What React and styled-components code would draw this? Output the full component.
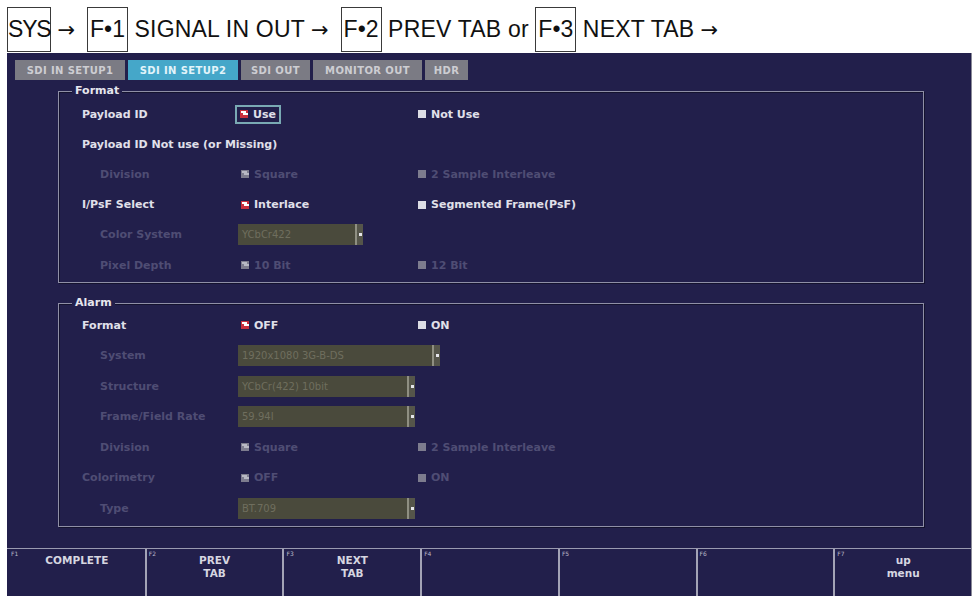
import React from "react";
import styled, { createGlobalStyle, css } from "styled-components";

const GlobalStyle = createGlobalStyle`
  html, body { margin: 0; padding: 0; background: #ffffff; }
  * { box-sizing: border-box; }
`;

const Page = styled.div`
  width: 973px;
  height: 596px;
  display: flex;
  flex-direction: column;
  overflow: hidden;
  background: #fff;
`;

const Breadcrumb = styled.div`
  height: 53px;
  padding: 7px 0 0 7px;
  display: flex;
  align-items: flex-start;
  font-family: "Liberation Sans", Arial, sans-serif;
  font-size: 23px;
  color: #111;
  white-space: pre;
`;

const KeyBox = styled.span`
  height: 45px;
  display: inline-flex;
  align-items: center;
  padding: 0 ${(p) => (p.$tight ? 0 : 2)}px;
  letter-spacing: ${(p) => (p.$tight ? -1.2 : 0)}px;
  border: 1px solid #3a3a3a;
`;

const Crumb = styled.span`
  height: 45px;
  display: inline-flex;
  align-items: center;
  letter-spacing: 0.2px;
`;

const Arrow = styled.span`
  height: 45px;
  display: inline-flex;
  align-items: center;
  font-family: "DejaVu Sans", sans-serif;
  font-size: 21px;
  margin: 0 12px 0 6px;
`;

const Screen = styled.div`
  flex: 1;
  margin-left: 7px;
  width: 965px;
  background: #221f4b;
  border-right: 1px solid #8a8a98;
  display: flex;
  flex-direction: column;
  font-family: "DejaVu Sans", sans-serif;
  padding-top: 7px;
`;

const TabBar = styled.div`
  display: flex;
  gap: 3px;
  height: 20px;
  padding-left: 8px;
`;

const Tab = styled.div`
  width: ${(p) => p.$w}px;
  height: 20px;
  display: flex;
  align-items: center;
  justify-content: center;
  font-size: 10px;
  font-weight: bold;
  letter-spacing: 0.4px;
  background: ${(p) => (p.$active ? "#45a7c9" : "#7b7b84")};
  color: ${(p) => (p.$active ? "#e2f4fa" : "#cdcdd2")};
  white-space: nowrap;
`;

const Group = styled.div`
  position: relative;
  margin: ${(p) => p.$mt}px 0 0 51px;
  width: 866px;
  height: ${(p) => p.$h}px;
  padding: ${(p) => p.$pt}px 0 0 23px;
  border: 1px solid #8f8fa6;
  box-shadow: inset 1px 1px 0 #14122e, 1px 1px 0 #14122e;
`;

const Legend = styled.span`
  position: absolute;
  top: -8px;
  left: 13px;
  padding: 0 3px;
  background: #221f4b;
  color: #e6e6ee;
  font-size: 11px;
  font-weight: bold;
  line-height: 14px;
`;

const Row = styled.div`
  display: grid;
  grid-template-columns: 159px 177px 1fr;
  align-items: center;
  height: ${(p) => p.$h}px;
`;

const Label = styled.div`
  padding-left: ${(p) => (p.$sub ? 18 : 0)}px;
  font-size: 11px;
  font-weight: bold;
  white-space: nowrap;
  color: ${(p) => (p.$disabled ? "#4f4d74" : "#e0e0ea")};
  ${(p) =>
    p.$span &&
    css`
      grid-column: 1 / -1;
    `}
`;

const Option = styled.div`
  justify-self: start;
  display: inline-flex;
  align-items: center;
  gap: 5px;
  height: 19px;
  font-size: 11px;
  font-weight: bold;
  white-space: nowrap;
  color: ${(p) => (p.$disabled ? "#4f4d74" : "#e0e0ea")};
  ${(p) =>
    p.$focus &&
    css`
      margin-left: -6px;
      padding: 0 3px;
      border: 2px solid #79a9b3;
    `}
`;

const Check = styled.span`
  position: relative;
  width: 8px;
  height: 8px;
  flex: none;
  background: ${(p) =>
    p.$disabled ? "#7d7c8e" : p.$checked ? "#c8303f" : "#dcdce4"};
  ${(p) =>
    p.$checked &&
    css`
      &::after {
        content: "";
        position: absolute;
        left: 1px;
        top: 1px;
        width: 5px;
        height: 2px;
        background: ${p.$disabled ? "#b8b8c4" : "#ffffff"};
        box-shadow: 2px 2px 0 ${p.$disabled ? "#b8b8c4" : "#ffffff"};
      }
    `}
`;

const Select = styled.div`
  margin-left: -3px;
  width: ${(p) => p.$w}px;
  height: 21px;
  display: flex;
  background: #4a4a3c;
`;

const SelectText = styled.span`
  flex: 1;
  display: flex;
  align-items: center;
  padding-left: 4px;
  font-size: 10px;
  color: #6f6e5e;
  white-space: nowrap;
  overflow: hidden;
`;

const SelectArrow = styled.span`
  width: 8px;
  display: flex;
  align-items: center;
  justify-content: center;
  border-left: 2px solid #8f8f82;
  background: #55554a;
  &::after {
    content: "";
    width: 3px;
    height: 3px;
    background: #e4e4ea;
  }
`;

const Spacer = styled.div`
  flex: 1;
`;

const FunctionBar = styled.div`
  height: 48px;
  display: flex;
  border-top: 1px solid #9a9ab0;
  background: #221f4b;
`;

const FKey = styled.div`
  position: relative;
  flex: 1;
  border-left: 2px solid ${(p) => (p.$first ? "transparent" : "#a3a3b6")};
  display: flex;
  flex-direction: column;
  align-items: center;
  padding-top: 5px;
  font-size: 10.5px;
  font-weight: bold;
  line-height: 13px;
  color: #d6d6e0;
  text-align: center;
`;

const FNum = styled.span`
  position: absolute;
  top: 1px;
  left: 2px;
  font-size: 6px;
  font-weight: normal;
  line-height: 7px;
  color: #b8b8c8;
`;

const tabs = [
  { t: "SDI IN SETUP1", w: 110 },
  { t: "SDI IN SETUP2", w: 110, active: true },
  { t: "SDI OUT", w: 69 },
  { t: "MONITOR OUT", w: 109 },
  { t: "HDR", w: 43 },
];

const formatRows = [
  { label: "Payload ID", opts: [{ t: "Use", c: true, focus: true }, { t: "Not Use" }] },
  { label: "Payload ID Not use (or Missing)", span: true },
  { label: "Division", sub: true, dis: true, opts: [{ t: "Square", c: true }, { t: "2 Sample Interleave" }] },
  { label: "I/PsF Select", opts: [{ t: "Interlace", c: true }, { t: "Segmented Frame(PsF)" }] },
  { label: "Color System", sub: true, dis: true, select: { t: "YCbCr422", w: 125 } },
  { label: "Pixel Depth", sub: true, dis: true, opts: [{ t: "10 Bit", c: true }, { t: "12 Bit" }] },
];

const alarmRows = [
  { label: "Format", opts: [{ t: "OFF", c: true }, { t: "ON" }] },
  { label: "System", sub: true, dis: true, select: { t: "1920x1080 3G-B-DS", w: 202 } },
  { label: "Structure", sub: true, dis: true, select: { t: "YCbCr(422) 10bit", w: 177 } },
  { label: "Frame/Field Rate", sub: true, dis: true, select: { t: "59.94I", w: 177 } },
  { label: "Division", sub: true, dis: true, opts: [{ t: "Square", c: true }, { t: "2 Sample Interleave" }] },
  { label: "Colorimetry", dis: true, opts: [{ t: "OFF", c: true }, { t: "ON" }] },
  { label: "Type", sub: true, dis: true, select: { t: "BT.709", w: 177 } },
];

const fkeys = ["COMPLETE", "PREV\nTAB", "NEXT\nTAB", "", "", "", "up\nmenu"];

function SettingRow({ row, h }) {
  return (
    <Row $h={h}>
      <Label $sub={row.sub} $disabled={row.dis} $span={row.span}>
        {row.label}
      </Label>
      {row.opts &&
        row.opts.map((o) => (
          <Option key={o.t} $focus={o.focus} $disabled={row.dis}>
            <Check $checked={o.c} $disabled={row.dis} />
            {o.t}
          </Option>
        ))}
      {row.select && (
        <Select $w={row.select.w}>
          <SelectText>{row.select.t}</SelectText>
          <SelectArrow />
        </Select>
      )}
    </Row>
  );
}

export default function App() {
  return (
    <>
      <GlobalStyle />
      <Page>
        <Breadcrumb>
          <KeyBox $tight>SYS</KeyBox>
          <Arrow>→</Arrow>
          <KeyBox>F•1</KeyBox>
          <Crumb> SIGNAL IN OUT</Crumb>
          <Arrow>→</Arrow>
          <KeyBox>F•2</KeyBox>
          <Crumb> PREV TAB or </Crumb>
          <KeyBox>F•3</KeyBox>
          <Crumb> NEXT TAB</Crumb>
          <Arrow>→</Arrow>
        </Breadcrumb>
        <Screen>
          <TabBar>
            {tabs.map((t) => (
              <Tab key={t.t} $w={t.w} $active={t.active}>
                {t.t}
              </Tab>
            ))}
          </TabBar>
          <Group $mt={11} $h={192} $pt={7}>
            <Legend>Format</Legend>
            {formatRows.map((r, i) => (
              <SettingRow key={i} row={r} h={30.2} />
            ))}
          </Group>
          <Group $mt={20} $h={224} $pt={6}>
            <Legend>Alarm</Legend>
            {alarmRows.map((r, i) => (
              <SettingRow key={i} row={r} h={30.5} />
            ))}
          </Group>
          <Spacer />
          <FunctionBar>
            {fkeys.map((k, i) => (
              <FKey key={i} $first={i === 0}>
                <FNum>F{i + 1}</FNum>
                {k.split("\n").map((line, j) => (
                  <span key={j}>{line}</span>
                ))}
              </FKey>
            ))}
          </FunctionBar>
        </Screen>
      </Page>
    </>
  );
}
